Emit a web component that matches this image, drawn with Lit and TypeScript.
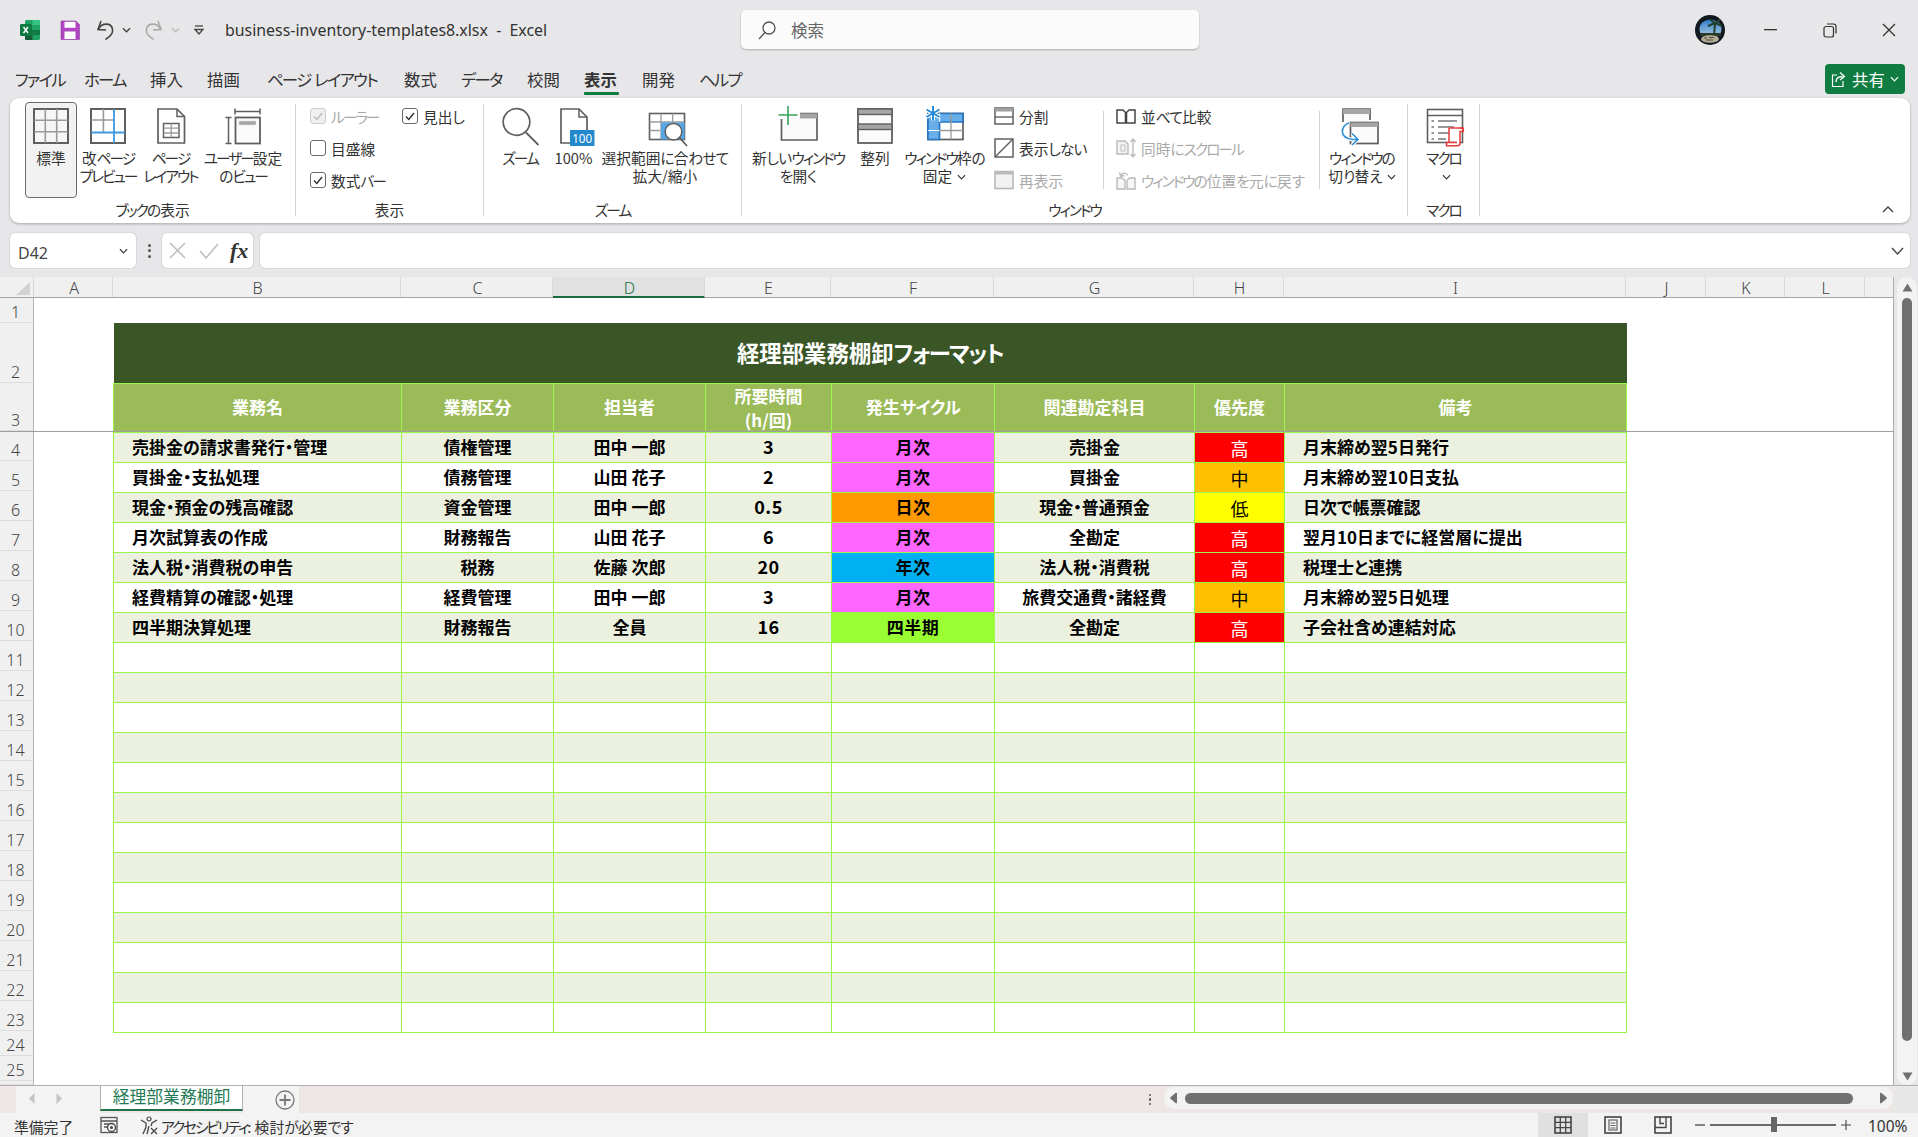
import { LitElement, html, css } from "lit";
import { customElement } from "lit/decorators.js";

const G = "#5f5f5f";
const L = "#9a9a9a";
const B = "#2f8fd6";

// Spans katakana and hiragana runs so they can be set tighter than the kanji, as the UI face does.
const t = (text: string) =>
  text.split(/([ァ-ヶー]+|[ぁ-ん]+)/).map((part) =>
    /^[ァ-ヶー]/.test(part) ? html`<span class="k">${part}</span>`
    : /^[ぁ-ん]/.test(part) ? html`<span class="h2">${part}</span>`
    : part);

const bigIcons: Record<string, any> = {
  normal: html`<svg class="ic40" viewBox="0 0 40 40"><rect x="3" y="3" width="34" height="34" fill="#f6f6f6" stroke="${G}" stroke-width="2"/><path d="M14.3 3V37M25.7 3V37M3 14.3H37M3 25.7H37" stroke="${L}" stroke-width="1.6" fill="none"/></svg>`,
  pagebreak: html`<svg class="ic40" viewBox="0 0 40 40"><rect x="3" y="3" width="34" height="34" fill="#fff" stroke="${G}" stroke-width="2"/><path d="M15.4 3V26M3 14H26" stroke="${L}" stroke-width="1.6" fill="none"/><path d="M26 3V37M3 26.5H37" stroke="#3b9ae1" stroke-width="1.8" fill="none"/></svg>`,
  pagelayout: html`<svg class="ic40" viewBox="0 0 40 40"><path d="M7 3H26L33.5 10.5V37H7Z" fill="#fff" stroke="${G}" stroke-width="1.7"/><path d="M26 3V10.5H33.5" fill="none" stroke="${G}" stroke-width="1.5"/><rect x="12.5" y="17.5" width="15.5" height="14" fill="#fff" stroke="${G}" stroke-width="1.5"/><path d="M12.5 22.2H28M12.5 27H28M20.2 17.5V31.5" stroke="${L}" stroke-width="1.3"/></svg>`,
  custom: html`<svg class="ic40" viewBox="0 0 40 40"><path d="M12 2.5V8.5M37 2.5V8.5M12 5.5H37M2.5 11.5H8.5M2.5 37.5H8.5M5.5 11.5V37.5" stroke="${G}" stroke-width="1.5" fill="none"/><rect x="12.5" y="11.5" width="24.5" height="26" fill="#fbfbfb" stroke="${G}" stroke-width="1.8"/><rect x="16" y="15" width="17" height="4" fill="#a5a5a5" stroke="#ddd" stroke-width=".6"/></svg>`,
  zoom: html`<svg class="ic40" viewBox="0 0 40 40"><circle cx="16.5" cy="16" r="13.3" fill="#fff" stroke="${G}" stroke-width="1.7"/><path d="M26 26.5L38.5 39" stroke="${G}" stroke-width="1.8"/></svg>`,
  hundred: html`<svg class="ic40" viewBox="0 0 40 40"><path d="M7 3H25L33 11V37H7Z" fill="#fff" stroke="${G}" stroke-width="1.7"/><path d="M25 3V11H33" fill="none" stroke="${G}" stroke-width="1.5"/><rect x="16" y="24" width="24.5" height="16" fill="#2488cc"/><text x="28.2" y="36.5" text-anchor="middle" font-size="13" fill="#fff" font-family="Noto Sans" textLength="20" lengthAdjust="spacingAndGlyphs">100</text></svg>`,
  selzoom: html`<svg class="ic40" viewBox="0 0 40 40"><rect x="4.5" y="7.5" width="35" height="26" fill="#fff" stroke="${G}" stroke-width="1.6"/><path d="M16 7.5V33M27.6 7.5V16M4.5 16H39M4.5 24.5H15" stroke="${L}" stroke-width="1.3" fill="none"/><rect x="16" y="16.5" width="23.5" height="17" fill="#56a7e3"/><circle cx="28.5" cy="25.7" r="8.3" fill="#fff" stroke="${G}" stroke-width="1.5"/><path d="M34.5 31.5L42 40" stroke="${G}" stroke-width="1.8"/></svg>`,
  newwin: html`<svg class="ic40" viewBox="0 0 40 40"><path d="M3.5 13V34H39V7.5H22" fill="#fbfbfb" stroke="${G}" stroke-width="1.7"/><rect x="22" y="7.5" width="17" height="5" fill="#a5a5a5"/><path d="M10 0V19M0.5 9H19.5" stroke="#36a35a" stroke-width="1.6"/></svg>`,
  arrange: html`<svg class="ic40" viewBox="0 0 40 40"><rect x="3" y="3" width="34" height="34" fill="#fbfbfb" stroke="${G}" stroke-width="1.8"/><rect x="3" y="3" width="34" height="5.5" fill="#a5a5a5" stroke="${G}" stroke-width="1.4"/><rect x="3" y="18" width="34" height="5.5" fill="#a5a5a5" stroke="${G}" stroke-width="1.4"/></svg>`,
  freeze: html`<svg class="ic40" viewBox="0 0 40 40"><rect x="3" y="7.5" width="35" height="26" fill="#fff" stroke="${G}" stroke-width="1.7"/><path d="M3 7.5H38V16H14.5V33.5H3Z" fill="#68aee8" stroke="#2478c4" stroke-width="1.7"/><path d="M26 7.5V33.5M14.5 24.5H38" stroke="${L}" stroke-width="1.3"/><path d="M3 24.5H14.5M14.5 7.5V16" stroke="#fff" stroke-width="1.2"/><path d="M8 0V14.5M1.5 3.5L14.5 11M14.5 3.5L1.5 11" stroke="#fff" stroke-width="4"/><path d="M8 0V14.5M1.5 3.5L14.5 11M14.5 3.5L1.5 11" stroke="#2488d8" stroke-width="1.9"/></svg>`,
  switchwin: html`<svg class="ic40" viewBox="2 0 40 40"><path d="M3 16V3H30V14" fill="#fbfbfb" stroke="${G}" stroke-width="1.7"/><rect x="3" y="3" width="27" height="5" fill="#a5a5a5"/><rect x="10.5" y="16.5" width="27.5" height="21" fill="#fbfbfb" stroke="${G}" stroke-width="1.7"/><rect x="10.5" y="16.5" width="27.5" height="4.5" fill="#a5a5a5"/><path d="M9 17C1 19 -2 32 13 33.5H17M12 27.5L18 33.5L12 39" fill="none" stroke="#fff" stroke-width="3.6"/><path d="M9 17C1 19 -2 32 13 33.5H17M12 27.5L18 33.5L12 39" fill="none" stroke="${B}" stroke-width="1.6"/></svg>`,
  macro: html`<svg class="ic40" viewBox="0 0 40 40"><rect x="3.5" y="3.5" width="35" height="33" fill="#fff" stroke="${G}" stroke-width="1.6"/><path d="M3.5 9.5H38.5" stroke="${G}" stroke-width="1.5"/><path d="M7.500 15H10M14 15H33M7.500 21H10M14 21H30M7.500 27H10M14 27H25M7.500 33H10M14 33H22" stroke="#777" stroke-width="1.3"/><path d="M25 22H39V25.500H36V37.500C36 39 35 39.700 33.500 39.700H22.500V36.500H33" fill="#fff" stroke="#e63b3b" stroke-width="1.5"/><path d="M25 22V36.500M36 22C38.500 22 39.500 23 39.500 25.500" fill="none" stroke="#e63b3b" stroke-width="1.5"/></svg>`,
};

const smIcons: Record<string, any> = {
  split: html`<svg class="ic20" viewBox="0 0 20 20"><rect x="1" y="2" width="18" height="16" fill="#fff" stroke="${G}" stroke-width="1.5"/><rect x="1" y="2" width="18" height="3.500" fill="#9f9f9f"/><path d="M1 11H19" stroke="${G}" stroke-width="1.4"/></svg>`,
  hide: html`<svg class="ic20" viewBox="0 0 20 20"><rect x="1" y="1" width="18" height="18" fill="#fff" stroke="${G}" stroke-width="1.5"/><path d="M1.500 18.500L18.500 1.500" stroke="${G}" stroke-width="1.4"/></svg>`,
  unhide: html`<svg class="ic20" viewBox="0 0 20 20"><rect x="1" y="1.500" width="18" height="17" fill="#f2f2f2" stroke="#b5b5b5" stroke-width="1.500"/><rect x="1" y="1.500" width="18" height="3" fill="#bbb"/></svg>`,
  compare: html`<svg class="ic20" viewBox="0 0 20 20"><path d="M1 4H7L9.500 6.500V17H1ZM10.500 6.500L13 4H19V17H10.500Z" fill="#fff" stroke="#444" stroke-width="1.500"/></svg>`,
  syncscroll: html`<svg class="ic20" viewBox="0 0 20 20"><path d="M1 3H9L12 6V16H1Z" fill="#f4f4f4" stroke="#bbb" stroke-width="1.400"/><path d="M5 7H9V13H5Z" fill="none" stroke="#c5c5c5" stroke-width="1.200"/><path d="M17 1V19M14.500 4L17 1L19.500 4M14.500 16L17 19L19.500 16" fill="none" stroke="#bbb" stroke-width="1.400"/></svg>`,
  resetpos: html`<svg class="ic20" viewBox="0 0 20 20"><path d="M1 8H6L9 10.500V19H1ZM11 10.500L13.500 8H19V19H11Z" fill="#f6f6f6" stroke="#bbb" stroke-width="1.400"/><path d="M5 6C6 2.500 10 2 12 5.500M3.500 2.500L4.800 6.500L8.500 5.500" fill="none" stroke="#bbb" stroke-width="1.400"/></svg>`,
};

const chev = html`<svg class="chev" viewBox="0 0 10 6"><path d="M1 1L5 5L9 1" fill="none" stroke="#333" stroke-width="1.300"/></svg>`;

const tabs: [string, number][] = [
  ["ファイル", 69], ["ホーム", 66], ["挿入", 57], ["描画", 60], ["ページ レイアウト", 137],
  ["数式", 57], ["データ", 66], ["校閲", 57], ["表示", 58], ["開発", 57], ["ヘルプ", 60],
];

const columns: [string, number][] = [
  ["A", 79], ["B", 288], ["C", 152], ["D", 152], ["E", 126], ["F", 163],
  ["G", 200], ["H", 90], ["I", 342], ["J", 80], ["K", 79], ["L", 80], ["", 29],
];
const tableCols = [288, 152, 152, 126, 163, 200, 90, 342];
const rowHeights = [25, 60, 48, ...Array(20).fill(30), 25, 25, 4];

const heads = ["業務名", "業務区分", "担当者", "", "発生サイクル", "関連勘定科目", "優先度", "備考"];
const cyc: Record<string, string> = { 月次: "m", 日次: "d", 年次: "y", 四半期: "q" };
const pri: Record<string, string> = { 高: "hi", 中: "mid", 低: "lo" };
const data = [
  ["売掛金の請求書発行・管理", "債権管理", "田中 一郎", "3", "月次", "売掛金", "高", "月末締め翌5日発行"],
  ["買掛金・支払処理", "債務管理", "山田 花子", "2", "月次", "買掛金", "中", "月末締め翌10日支払"],
  ["現金・預金の残高確認", "資金管理", "田中 一郎", "0.5", "日次", "現金・普通預金", "低", "日次で帳票確認"],
  ["月次試算表の作成", "財務報告", "山田 花子", "6", "月次", "全勘定", "高", "翌月10日までに経営層に提出"],
  ["法人税・消費税の申告", "税務", "佐藤 次郎", "20", "年次", "法人税・消費税", "高", "税理士と連携"],
  ["経費精算の確認・処理", "経費管理", "田中 一郎", "3", "月次", "旅費交通費・諸経費", "中", "月末締め翌5日処理"],
  ["四半期決算処理", "財務報告", "全員", "16", "四半期", "全勘定", "高", "子会社含め連結対応"],
  ...Array(13).fill(["", "", "", "", "", "", "", ""]),
];

@customElement("app-root")
export class AppRoot extends LitElement {
  static styles = css`
    :host { display: block; width: 1918px; height: 1137px; overflow: hidden; }
    * { box-sizing: border-box; }
    .app { width: 1918px; height: 1137px; background: #e7e7e9; display: flex; flex-direction: column; color: #333;
      font-family: "Noto Sans CJK JP", "Noto Sans", sans-serif; font-feature-settings: "palt"; }
    .k { letter-spacing: var(--k, -2px); }
    .h2 { letter-spacing: var(--h, -.8px); }
    svg { display: block; flex: none; overflow: visible; }
    .ic40 { width: 40px; height: 40px; }
    .ic20 { width: 20px; height: 20px; }
    .chev { width: 9px; height: 6px; }

    .titlebar { height: 60px; flex: none; display: flex; align-items: center; padding-left: 20px; }
    .tb-gap20 { margin-left: 20px; } .tb-gap15 { margin-left: 15px; }
    .tb-chev { margin-left: 7px; }
    .tb-redo { margin-left: 13px; }
    .tb-cust { margin-left: 13px; width: 12px; }
    .doc { width: 516px; flex: none; margin-left: 20px; font: 15.900px/20px "Noto Sans", sans-serif; color: #333; white-space: pre; }
    .search { width: 458px; height: 39px; background: #fbfbfb; border-radius: 5px; box-shadow: 0 1px 2px rgba(0,0,0,.25);
      display: flex; align-items: center; padding-left: 16px; gap: 7px; font-size: 16.500px; color: #666; flex: none; margin-top: -1px; }
    .search span { margin-left: 7px; }
    .avatar { margin-left: auto; margin-right: 15px; width: 30px; height: 30px; }
    .win { width: 60px; height: 40px; display: flex; align-items: center; justify-content: center; }
    .win.last { width: 58px; }

    .tabs { height: 38px; flex: none; display: flex; align-items: center; padding-left: 15px; font-size: 16.400px; position: relative; --k: -1.700px; }
    .tab { flex: none; height: 38px; line-height: 38px; white-space: nowrap; position: relative; }
    .tab.on { font-weight: 700; }
    .tab.on::after { content: ""; position: absolute; left: 0; width: 35px; top: 32px; height: 3px; background: #107c41; border-radius: 1px; }
    .share { margin-left: auto; margin-right: 13px; width: 80px; height: 30px; background: #107c41; border-radius: 4px; color: #fff;
      display: flex; align-items: center; padding-left: 6px; gap: 5px; font-size: 16.400px; }
    .share .chev path { stroke: #fff; }

    .ribbon { height: 125px; flex: none; margin: 0 8px 0 10px; background: #fff; border-radius: 9px; box-shadow: 0 1px 3px rgba(0,0,0,.28);
      display: flex; font-size: 14.700px; line-height: 19px; }
    .group { flex: none; display: flex; flex-direction: column; }
    .body { height: 103px; display: flex; }
    .glabel { height: 20px; line-height: 20px; text-align: center; white-space: nowrap; margin-top: -1px; }
    .sep { width: 1px; height: 112px; margin-top: 6px; background: #d4d4d4; flex: none; }
    .isep { width: 1px; height: 78px; margin-top: 13px; background: #d4d4d4; flex: none; }
    .big { flex: none; height: 96px; margin-top: 4px; display: flex; flex-direction: column; align-items: center; padding-top: 4px; white-space: nowrap; text-align: center; }
    .big.on { background: #f2f2f2; border: 1px solid #6b6b6b; border-radius: 4px; padding-top: 3px; }
    .big .lines { margin-top: 2.500px; }
    .line { height: 18.500px; line-height: 18.500px; text-align: center; }
    .line .chev { display: inline-block; margin-left: 5px; vertical-align: 2px; }
    .smcol { display: flex; flex-direction: column; padding-top: 2px; flex: none; }
    .sm { height: 32px; display: flex; align-items: center; gap: 5px; white-space: nowrap; }
    .off { color: #aaa; }
    .cbgrid { display: grid; grid-template-columns: 92px auto; grid-auto-rows: 32px; padding: 2px 0 0 14px; }
    .cb { display: flex; align-items: center; gap: 5px; white-space: nowrap; }
    .box { width: 16px; height: 16px; border: 1.300px solid #6a6a6a; border-radius: 3px; background: #fff; flex: none; display: flex; align-items: center; justify-content: center; }
    .box.dis { border-color: #ccc; background: #f0f0f0; }
    .collapse { margin-left: auto; margin-right: 16px; margin-top: auto; margin-bottom: 10px; width: 12px; }

    .fbar { height: 35px; flex: none; margin: 10px 8px 9px 10px; display: flex; font-size: 16px; }
    .field { background: #fff; border-radius: 5px; box-shadow: 0 0 1.500px rgba(0,0,0,.3); display: flex; align-items: center; flex: none; }
    .name { width: 126px; padding: 0 8px 0 8px; justify-content: space-between; font-family: "Noto Sans", sans-serif; color: #444; }
    .name span { padding-top: 4px; }
    .dots { width: 26px; display: flex; flex-direction: column; align-items: center; justify-content: center; gap: 2.500px; }
    .dots i { width: 3px; height: 3px; background: #555; border-radius: 50%; }
    .fx { width: 91px; padding-left: 7px; gap: 13px; }
    .fxt { font: italic 700 22px/1 "Liberation Serif", serif; color: #333; margin-left: -2px; }
    .input { flex: 1; margin-left: 7px; justify-content: flex-end; padding-right: 6px; }

    .sheet { height: 808px; flex: none; display: flex; position: relative; }
    .grid { width: 1894px; flex: none; display: flex; flex-direction: column; border-right: 1px solid #aaa; position: relative; overflow: hidden; }
    .freeze { position: absolute; left: 0; right: 0; top: 154px; height: 1px; background: #9f9f9f; z-index: 2; }
    .colhead { height: 21px; flex: none; display: flex; background: #f0f0f0; border-bottom: 1px solid #a5a5a5; }
    .corner { width: 34px; flex: none; border-right: 1px solid #d5d5d5; padding: 5px 0 0 16px; }
    .corner svg { width: 14px; height: 13px; }
    .col { flex: none; text-align: center; font-size: 16px; line-height: 21px; padding: 1px 0 0 2px; color: #444; border-right: 1px solid #d8d8d8; font-family: "Noto Sans", sans-serif; font-weight: 300; }
    .col.act { background: #e1e1e1; color: #1c6b40; border-bottom: 2px solid #1c6b40; height: 21px; }
    .panes { flex: 1; display: flex; min-height: 0; }
    .rowhead { width: 34px; flex: none; background: #f0f0f0; border-right: 1px solid #b5b5b5; display: flex; flex-direction: column; }
    .rh { flex: none; display: flex; align-items: flex-end; justify-content: center; padding: 0 2px 0 0; border-bottom: 1px solid #dcdcdc;
      font-size: 16px; line-height: 20px; color: #444; font-family: "Noto Sans", sans-serif; font-weight: 300; overflow: hidden; }
    .cells { flex: 1; background: #fff; padding: 25px 0 0 79px; overflow: hidden; }
    table { border-collapse: collapse; table-layout: fixed; width: 1513px; font-size: 17px; font-weight: 700; color: #000; --k: -.500px; --h: 0px; }
    td { border: 1px solid #9bf54a; height: 30px; padding: 0 0 2px; text-align: center; white-space: nowrap; overflow: hidden; }
    td.title { height: 60px; background: #3a5526; color: #fff; font-size: 22.400px; border: 0; border-bottom: 1px solid #9bf54a; --k: -1.500px; }
    td.h { height: 48px; background: #9bbb59; color: #fff; line-height: 22px; }
    td.h.two { line-height: 24px; padding: 0; }
    tr.alt td { background: #ebf0df; }
    td.l { text-align: left; padding-left: 18px; }
    td.num { font-size: 18px; letter-spacing: .5px; }
    tr td.m { background: #ff66ff; } tr td.d { background: #ff9900; } tr td.y { background: #00b0f0; } tr td.q { background: #99ff33; }
    tr td.m, tr td.d, tr td.y, tr td.q { letter-spacing: .5px; }
    tr td.hi { background: #ff0000; color: #fff; } tr td.mid { background: #ffc000; } tr td.lo { background: #ffff00; }
    tr td.hi, tr td.mid, tr td.lo { font-weight: 400; font-size: 18px; padding: 1px 0 0; }

    .vscroll { flex: 1; display: flex; justify-content: center; padding-left: 3px; padding-right: 1px; }
    .vtrack { flex: 1; background: #f3f3f3; border-radius: 10px; display: flex; flex-direction: column; align-items: center; }
    .varrow { height: 20px; flex: none; display: flex; align-items: center; justify-content: center; }
    .vthumb { width: 10px; height: 743px; background: #707070; border-radius: 5px; margin-top: 1px; flex: none; }
    .varrow.down { margin-top: auto; height: 18px; margin-bottom: 0; padding-bottom: 0; }
    .varrow svg { width: 11px; height: 9px; }

    .tabbar { height: 28px; flex: none; display: flex; background: #eee6e5; border-top: 1px solid #b0b0b0; padding-left: 15.500px; }
    .nav { width: 84.500px; flex: none; background: #f3f3f3; display: flex; align-items: center; padding: 0 0 2px 13px; gap: 21px; }
    .nav svg { width: 6px; height: 11px; }
    .sh { width: 143px; flex: none; height: 25px; background: #fff; border-left: 1px solid #b0b0b0; border-right: 1px solid #b0b0b0; border-bottom: 2px solid #217346;
      color: #1f7a54; font-size: 16.800px; line-height: 21px; text-align: center; }
    .add { width: 56px; flex: none; background: #f3f3f3; display: flex; align-items: center; padding-left: 32px; }
    .add svg { width: 20px; height: 20px; }
    .tsp { width: 865px; flex: none; display: flex; align-items: center; justify-content: flex-end; padding-right: 13px; }
    .tsp .dots { width: auto; gap: 2px; }
    .tsp .dots i { width: 2.500px; height: 2.500px; }
    .hscroll { width: 729px; flex: none; height: 22px; margin-top: 1px; background: #f3f3f3; border-radius: 10px; display: flex; align-items: center; padding-left: 6px; }
    .hscroll .la, .hscroll .ra { width: 8px; height: 12px; flex: none; }
    .hthumb { width: 668px; height: 11px; background: #707070; border-radius: 6px; margin: 0 26px 0 7px; flex: none; }
    .tend { flex: 1; background: #e7e7e7; }

    .status { height: 24px; flex: none; background: #f3f3f3; display: flex; align-items: center; font-size: 14.800px; color: #333; white-space: nowrap; --k: -2.200px; }
    .st1 { margin-left: 14px; width: 86px; padding-top: 2px; }
    .st2 { width: 18px; height: 18px; }
    .st3 { width: 19px; height: 19px; margin-left: 22px; }
    .st4 { margin-left: 2px; padding-top: 2px; }
    .vbtn { width: 50px; height: 24px; display: flex; align-items: center; justify-content: center; flex: none; }
    .vbtn svg { width: 18px; height: 18px; }
    .vbtn.on { background: #e0e0e0; }
    .vbtns { margin-left: auto; display: flex; }
    .zoomer { display: flex; align-items: center; margin-left: 7px; flex: none; }
    .z-track { width: 126px; height: 1.500px; background: #6a6a6a; margin: 0 5px; position: relative; }
    .z-thumb { position: absolute; left: 61px; top: -7px; width: 6px; height: 15px; background: #666; }
    .zm { width: 10px; height: 10px; }
    .zpct { margin-left: 17px; margin-right: 8px; width: 42px; padding-top: 2px; font-family: "Noto Sans", sans-serif; font-size: 15.500px; }
  `;

  private big(icon: string, lines: any[], w: number, on = false) {
    return html`<div class="big ${on ? "on" : ""}" style="width:${w}px">
      ${bigIcons[icon]}
      <div class="lines">${lines.map((l) => html`<div class="line">${l}</div>`)}</div>
    </div>`;
  }

  private check(label: string, checked: boolean, dis = false) {
    const c = dis ? "#bbb" : "#333";
    return html`<div class="cb ${dis ? "off" : ""}">
      <span class="box ${dis ? "dis" : ""}">${checked
        ? html`<svg width="10" height="9" viewBox="0 0 10 9"><path d="M1 4.500L3.800 7.500L9 1" fill="none" stroke="${c}" stroke-width="1.400"/></svg>`
        : ""}</span><span>${t(label)}</span></div>`;
  }

  private sm(icon: string, label: string, off = false) {
    return html`<div class="sm ${off ? "off" : ""}">${smIcons[icon]}<span>${t(label)}</span></div>`;
  }

  private titlebar() {
    return html`<div class="titlebar">
      <svg class="ic20" viewBox="0 0 20 20">
        <rect x="5" y="0" width="15" height="20" rx="1.500" fill="#21a366"/>
        <path d="M12.500 0H18.500A1.500 1.500 0 0 1 20 1.500V5H12.500Z" fill="#33c481"/>
        <path d="M5 10H12.500V20H6.500A1.500 1.500 0 0 1 5 18.500Z" fill="#185c37"/>
        <path d="M12.500 10H20V15H12.500Z" fill="#107c41"/>
        <rect x="0" y="4" width="12" height="12" rx="1.200" fill="#0f7a40"/>
        <path d="M3.500 7L8 13M8 7L3.500 13" stroke="#fff" stroke-width="1.500"/>
      </svg>
      <svg class="ic20 tb-gap20" viewBox="0 0 20 20">
        <path d="M1 1H16L19.500 4.500V19.500H1Z" fill="#b146c2" stroke="#8f3aa3" stroke-width=".6"/>
        <rect x="4.500" y="1.800" width="11" height="6" fill="#fff"/>
        <rect x="4.500" y="11.500" width="11" height="7.500" fill="#fff"/>
      </svg>
      <svg class="ic20 tb-gap15" viewBox="0 0 20 20"><path d="M6 1L3 9.500L11 10" fill="none" stroke="#444" stroke-width="1.600"/><path d="M3.500 9C7 2.500 16 2.500 17.500 9C18.500 13.500 14.500 17 10.500 19.500" fill="none" stroke="#444" stroke-width="1.600"/></svg>
      <svg class="chev tb-chev" viewBox="0 0 10 6"><path d="M1 1L5 5L9 1" fill="none" stroke="#444" stroke-width="1.500"/></svg>
      <svg class="ic20 tb-redo" viewBox="0 0 20 20"><path d="M14 1L17 9.500L9 10" fill="none" stroke="#aaa" stroke-width="1.600"/><path d="M16.500 9C13 2.500 4 2.500 2.500 9C1.500 13.500 5.500 17 9.500 19.500" fill="none" stroke="#aaa" stroke-width="1.600"/></svg>
      <svg class="chev tb-chev" viewBox="0 0 10 6"><path d="M1 1L5 5L9 1" fill="none" stroke="#bbb" stroke-width="1.500"/></svg>
      <svg class="tb-cust" height="10" viewBox="0 0 12 10"><path d="M2 1H10" stroke="#444" stroke-width="1.300"/><path d="M2 4.500L6 9L10 4.500Z" fill="none" stroke="#444" stroke-width="1.300"/></svg>
      <div class="doc">business-inventory-templates8.xlsx  -  Excel</div>
      <div class="search">
        <svg class="ic20" viewBox="0 0 20 20"><circle cx="12" cy="8" r="6" fill="none" stroke="#555" stroke-width="1.300"/><path d="M8 12.500L2 19" stroke="#555" stroke-width="1.400"/></svg>
        <span>検索</span>
      </div>
      <svg class="avatar" viewBox="0 0 30 30">
        <defs>
          <clipPath id="av"><circle cx="15" cy="15" r="15"/></clipPath>
          <linearGradient id="sky" x1="0" y1="0" x2="0" y2="1"><stop offset="0" stop-color="#2f7cc8"/><stop offset="1" stop-color="#b8d4e4"/></linearGradient>
        </defs>
        <g clip-path="url(#av)">
          <rect width="30" height="30" fill="#121820"/>
          <ellipse cx="15.500" cy="14" rx="11" ry="9.500" fill="url(#sky)"/>
          <path d="M19 21L20 8M20 8L13 11M20 8L27 11M20 8L15 4.500M20 8L25 4.500" stroke="#25402a" stroke-width="2" fill="none"/>
          <rect x="5" y="18" width="21" height="3" fill="#2b3a2a"/>
          <ellipse cx="15" cy="24" rx="9" ry="3.800" fill="#b3ab95"/>
          <path d="M9 23h3M14 22.500h5M11 25h7" stroke="#54503f" stroke-width="1.200"/>
        </g>
      </svg>
      <div class="win"><svg width="13" height="2" viewBox="0 0 13 2"><rect width="13" height="1.300" fill="#333"/></svg></div>
      <div class="win"><svg width="14" height="15" viewBox="0 0 14 15"><rect x="1" y="3.500" width="9.500" height="10.500" rx="2" fill="none" stroke="#333" stroke-width="1.200"/><path d="M4 1H10.500C12 1 13 2 13 3.500V10.500" fill="none" stroke="#333" stroke-width="1.200"/></svg></div>
      <div class="win last"><svg width="14" height="14" viewBox="0 0 14 14"><path d="M1 1L13 13M13 1L1 13" stroke="#333" stroke-width="1.300"/></svg></div>
    </div>`;
  }

  private ribbon() {
    return html`<div class="ribbon">
      <div class="group" style="width:285px">
        <div class="body" style="padding-left:15px">
          ${this.big("normal", ["標準"], 52, true)}
          ${this.big("pagebreak", [t("改ページ"), t("プレビュー")], 62)}
          ${this.big("pagelayout", [t("ページ"), t("レイアウト")], 63)}
          ${this.big("custom", [t("ユーザー設定"), t("のビュー")], 82)}
        </div>
        <div class="glabel">${t("ブックの表示")}</div>
      </div>
      <div class="sep"></div>
      <div class="group" style="width:187px">
        <div class="body"><div class="cbgrid">
          ${this.check("ルーラー", true, true)}${this.check("見出し", true)}
          ${this.check("目盛線", false)}<span></span>
          ${this.check("数式バー", true)}
        </div></div>
        <div class="glabel">表示</div>
      </div>
      <div class="sep"></div>
      <div class="group" style="width:257px">
        <div class="body" style="padding-left:6px">
          ${this.big("zoom", [t("ズーム")], 60)}
          ${this.big("hundred", ["100%"], 47)}
          ${this.big("selzoom", [t("選択範囲に合わせて"), t("拡大/縮小")], 136)}
        </div>
        <div class="glabel">${t("ズーム")}</div>
      </div>
      <div class="sep"></div>
      <div class="group" style="width:665px">
        <div class="body" style="padding-left:6px">
          ${this.big("newwin", [t("新しいウィンドウ"), t("を開く")], 100)}
          ${this.big("arrange", ["整列"], 54)}
          ${this.big("freeze", [t("ウィンドウ枠の"), html`固定${chev}`], 85)}
          <div class="smcol" style="width:116px;padding-left:7px">
            ${this.sm("split", "分割")}${this.sm("hide", "表示しない")}${this.sm("unhide", "再表示", true)}
          </div>
          <div class="isep"></div>
          <div class="smcol" style="width:215px;padding-left:12px">
            ${this.sm("compare", "並べて比較")}${this.sm("syncscroll", "同時にスクロール", true)}${this.sm("resetpos", "ウィンドウの位置を元に戻す", true)}
          </div>
          <div class="isep"></div>
          ${this.big("switchwin", [t("ウィンドウの"), html`${t("切り替え")}${chev}`], 84)}
        </div>
        <div class="glabel">${t("ウィンドウ")}</div>
      </div>
      <div class="sep"></div>
      <div class="group" style="width:71px">
        <div class="body">${this.big("macro", [t("マクロ"), chev], 71)}</div>
        <div class="glabel">${t("マクロ")}</div>
      </div>
      <div class="sep"></div>
      <svg class="collapse" height="8" viewBox="0 0 12 8"><path d="M1 7L6 2L11 7" fill="none" stroke="#444" stroke-width="1.400"/></svg>
    </div>`;
  }

  private sheetTable() {
    return html`<table>
      <colgroup>${tableCols.map((w) => html`<col style="width:${w}px" />`)}</colgroup>
      <tr><td class="title" colspan="8">${t("経理部業務棚卸フォーマット")}</td></tr>
      <tr>${heads.map((h, i) =>
        i === 3 ? html`<td class="h two">所要時間<br />(h/回)</td>` : html`<td class="h">${t(h)}</td>`)}</tr>
      ${data.map((r, i) => html`<tr class="${i % 2 === 0 ? "alt" : ""}">
        <td class="l">${r[0]}</td><td>${r[1]}</td><td>${r[2]}</td><td class="num">${r[3]}</td>
        <td class="${cyc[r[4]] ?? ""}">${r[4]}</td><td>${r[5]}</td>
        <td class="${pri[r[6]] ?? ""}">${r[6]}</td><td class="l">${r[7]}</td>
      </tr>`)}
    </table>`;
  }

  private tabbar() {
    return html`<div class="tabbar">
      <div class="nav">
        <svg viewBox="0 0 6 11"><path d="M5.500 0V11L0 5.500Z" fill="#c4c4c4"/></svg>
        <svg viewBox="0 0 6 11"><path d="M.5 0V11L6 5.500Z" fill="#c4c4c4"/></svg>
      </div>
      <div class="sh">経理部業務棚卸</div>
      <div class="add"><svg viewBox="0 0 20 20"><circle cx="10" cy="10" r="9" fill="none" stroke="#777" stroke-width="1.300"/><path d="M10 4.500V15.500M4.500 10H15.500" stroke="#777" stroke-width="1.800"/></svg></div>
      <div class="tsp"><div class="dots"><i></i><i></i><i></i></div></div>
      <div class="hscroll">
        <svg class="la" viewBox="0 0 8 12"><path d="M7 1.500V10.500C7 11.500 6 11.500 5.500 11L.5 6.800C0 6.300 0 5.700.5 5.200L5.500 1C6 .5 7 .5 7 1.500Z" fill="#707070"/></svg>
        <div class="hthumb"></div>
        <svg class="ra" viewBox="0 0 8 12"><path d="M1 1.500V10.500C1 11.500 2 11.500 2.500 11L7.500 6.800C8 6.300 8 5.700 7.500 5.200L2.500 1C2 .5 1 .5 1 1.500Z" fill="#707070"/></svg>
      </div>
      <div class="tend"></div>
    </div>`;
  }

  private statusbar() {
    return html`<div class="status">
      <span class="st1">準備完了</span>
      <svg class="st2" viewBox="0 0 18 18"><rect x="1" y="1.500" width="16" height="15" fill="none" stroke="#555" stroke-width="1.300"/><path d="M1 5H17M4 8H9M4 11H7" stroke="#555" stroke-width="1.300"/><circle cx="11.500" cy="11.500" r="4" fill="#f3f3f3" stroke="#444" stroke-width="1.300"/><circle cx="11.500" cy="11.500" r="1.500" fill="#444"/></svg>
      <svg class="st3" viewBox="0 0 19 19"><circle cx="9" cy="3" r="2" fill="none" stroke="#444" stroke-width="1.200"/><path d="M1 4L6 7L6 11L3 18M17 4L12 7L11 10M9 10L7 18" fill="none" stroke="#444" stroke-width="1.300"/><path d="M11 12L17 18M17 12L11 18" stroke="#444" stroke-width="1.300"/></svg>
      <span class="st4">${t("アクセシビリティ: 検討が必要です")}</span>
      <div class="vbtns">
        <div class="vbtn on"><svg viewBox="0 0 18 18"><rect x="1" y="1" width="16" height="16" fill="none" stroke="#444" stroke-width="1.600"/><path d="M6.300 1V17M11.700 1V17M1 6.300H17M1 11.700H17" stroke="#444" stroke-width="1.300"/></svg></div>
        <div class="vbtn"><svg viewBox="0 0 18 18"><rect x="1" y="1" width="16" height="16" fill="none" stroke="#444" stroke-width="1.600"/><rect x="5" y="4" width="8" height="10" fill="none" stroke="#666" stroke-width="1.200"/><path d="M6.500 7H11.500M6.500 9.500H11.500M6.500 12H11.500" stroke="#666" stroke-width="1"/></svg></div>
        <div class="vbtn"><svg viewBox="0 0 18 18"><rect x="1" y="1" width="16" height="16" fill="none" stroke="#444" stroke-width="1.600"/><path d="M1 11.500H12V1M6 1V7.500H10" fill="none" stroke="#444" stroke-width="1.400"/></svg></div>
      </div>
      <div class="zoomer">
        <svg class="zm" viewBox="0 0 10 10"><path d="M0 5H10" stroke="#444" stroke-width="1.300"/></svg>
        <div class="z-track"><div class="z-thumb"></div></div>
        <svg class="zm" viewBox="0 0 10 10"><path d="M0 5H10M5 0V10" stroke="#444" stroke-width="1.100"/></svg>
      </div>
      <span class="zpct">100%</span>
    </div>`;
  }

  render() {
    return html`<div class="app">
      ${this.titlebar()}
      <div class="tabs">
        ${tabs.map(([label, w]) => html`<div class="tab ${label === "表示" ? "on" : ""}" style="width:${w}px">${t(label)}</div>`)}
        <div class="share">
          <svg width="16" height="17" viewBox="0 0 16 17"><path d="M6 4H1.500V15.500H12V10" fill="none" stroke="#fff" stroke-width="1.200"/><path d="M5 11C5 7 8 5.500 11.500 5.500M9 1.500L13.500 5.500L9 9" fill="none" stroke="#fff" stroke-width="1.300"/></svg>
          <span>共有</span>${chev}
        </div>
      </div>
      ${this.ribbon()}
      <div class="fbar">
        <div class="field name"><span>D42</span>${chev}</div>
        <div class="dots"><i></i><i></i><i></i></div>
        <div class="field fx">
          <svg width="17" height="17" viewBox="0 0 17 17"><path d="M1 1L16 16M16 1L1 16" stroke="#bdbdbd" stroke-width="1.500"/></svg>
          <svg width="20" height="16" viewBox="0 0 20 16"><path d="M1 8L7 15L19 1" fill="none" stroke="#bdbdbd" stroke-width="1.500"/></svg>
          <span class="fxt">fx</span>
        </div>
        <div class="field input"><svg width="13" height="8" viewBox="0 0 13 8"><path d="M1 1L6.500 7L12 1" fill="none" stroke="#444" stroke-width="1.400"/></svg></div>
      </div>
      <div class="sheet">
        <div class="grid">
          <div class="freeze"></div>
          <div class="colhead">
            <div class="corner"><svg viewBox="0 0 14 13"><path d="M14 0V13H0Z" fill="#d2d2d2"/></svg></div>
            ${columns.map(([c, w]) => html`<div class="col ${c === "D" ? "act" : ""}" style="width:${w}px">${c}</div>`)}
          </div>
          <div class="panes">
            <div class="rowhead">${rowHeights.map((h, i) => html`<div class="rh" style="height:${h}px">${h > 10 ? i + 1 : ""}</div>`)}</div>
            <div class="cells">${this.sheetTable()}</div>
          </div>
        </div>
        <div class="vscroll"><div class="vtrack">
          <div class="varrow"><svg viewBox="0 0 11 9"><path d="M5.500 .5L10.500 8.500H.5Z" fill="#707070"/></svg></div>
          <div class="vthumb"></div>
          <div class="varrow down"><svg viewBox="0 0 11 9"><path d="M5.500 8.500L10.500 .5H.5Z" fill="#707070"/></svg></div>
        </div></div>
      </div>
      ${this.tabbar()}
      ${this.statusbar()}
    </div>`;
  }
}
